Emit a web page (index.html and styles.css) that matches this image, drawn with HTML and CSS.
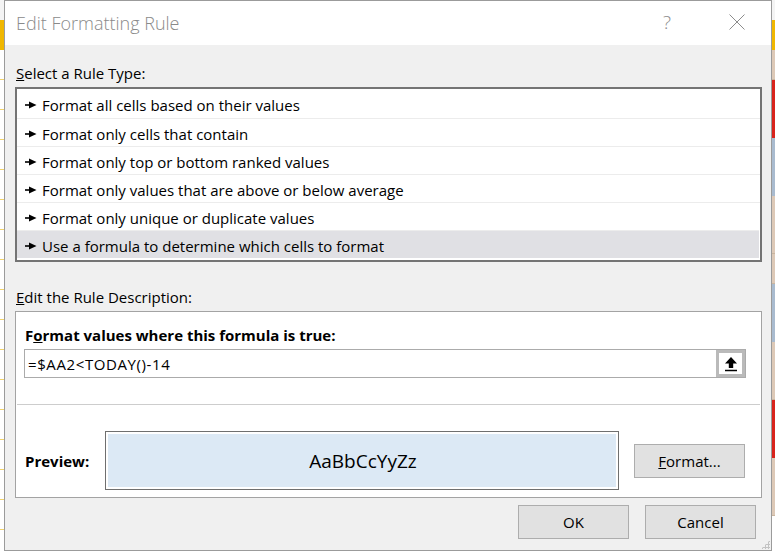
FILE: index.html
```html
<!DOCTYPE html>
<html lang="en">
<head>
  <meta charset="UTF-8">
  <meta name="viewport" content="width=device-width, initial-scale=1.0">
  <title>Edit Formatting Rule</title>
  <link rel="stylesheet" href="styles.css">
</head>
<body>
  <div class="desk">
    <!-- Mép bảng tính bên trái -->
    <div class="sheet sheet-left">
      <div class="cell c-blank"></div>
      <div class="cell c-yellow"></div>
      <div class="cell c-line"></div>
      <div class="cell c-line"></div>
      <div class="cell c-line"></div>
      <div class="cell c-line"></div>
      <div class="cell c-line"></div>
      <div class="cell c-line"></div>
      <div class="cell c-line"></div>
      <div class="cell c-line"></div>
      <div class="cell c-line"></div>
      <div class="cell c-line"></div>
      <div class="cell c-line"></div>
      <div class="cell c-line"></div>
      <div class="cell c-line"></div>
      <div class="cell c-line"></div>
      <div class="cell c-line"></div>
      <div class="cell c-line"></div>
    </div>

    <!-- Hộp thoại -->
    <div class="dialog">
      <div class="titlebar">
        <span class="title">Edit Formatting Rule</span>
        <span class="help">?</span>
        <svg class="close" width="16" height="16" viewBox="0 0 16 16">
          <path d="M0.5 0.5 L15.5 15.5 M15.5 0.5 L0.5 15.5" stroke="#8c8c8c" stroke-width="1" fill="none"/>
        </svg>
      </div>

      <div class="dialog-body">
        <div class="label label-type"><u>S</u>elect a Rule Type:</div>
        <ul class="rule-list">
          <li class="rule-item"><svg class="pointer" width="12" height="8" viewBox="0 0 12 8"><path d="M0 4h5" stroke="#000" stroke-width="1.6"/><path d="M4 0.5 L11.5 4 L4 7.5 Z" fill="#000"/></svg>Format all cells based on their values</li>
          <li class="rule-item"><svg class="pointer" width="12" height="8" viewBox="0 0 12 8"><path d="M0 4h5" stroke="#000" stroke-width="1.6"/><path d="M4 0.5 L11.5 4 L4 7.5 Z" fill="#000"/></svg>Format only cells that contain</li>
          <li class="rule-item"><svg class="pointer" width="12" height="8" viewBox="0 0 12 8"><path d="M0 4h5" stroke="#000" stroke-width="1.6"/><path d="M4 0.5 L11.5 4 L4 7.5 Z" fill="#000"/></svg>Format only top or bottom ranked values</li>
          <li class="rule-item"><svg class="pointer" width="12" height="8" viewBox="0 0 12 8"><path d="M0 4h5" stroke="#000" stroke-width="1.6"/><path d="M4 0.5 L11.5 4 L4 7.5 Z" fill="#000"/></svg>Format only values that are above or below average</li>
          <li class="rule-item"><svg class="pointer" width="12" height="8" viewBox="0 0 12 8"><path d="M0 4h5" stroke="#000" stroke-width="1.6"/><path d="M4 0.5 L11.5 4 L4 7.5 Z" fill="#000"/></svg>Format only unique or duplicate values</li>
          <li class="rule-item selected"><svg class="pointer" width="12" height="8" viewBox="0 0 12 8"><path d="M0 4h5" stroke="#000" stroke-width="1.6"/><path d="M4 0.5 L11.5 4 L4 7.5 Z" fill="#000"/></svg>Use a formula to determine which cells to format</li>
        </ul>

        <div class="label label-desc"><u>E</u>dit the Rule Description:</div>
        <div class="desc-box">
          <div class="desc-top">
            <div class="desc-heading">F<u>o</u>rmat values where this formula is true:</div>
            <div class="formula">
              <span class="formula-text">=$AA2&lt;TODAY()-14</span>
              <span class="ref-btn">
                <svg width="14" height="16" viewBox="0 0 14 16">
                  <path d="M7 1 L13 7.5 L9.2 7.5 L9.2 12 L4.8 12 L4.8 7.5 L1 7.5 Z" fill="#000"/>
                  <path d="M1 14.5h12" stroke="#000" stroke-width="1.5"/>
                </svg>
              </span>
            </div>
          </div>
          <div class="preview-row">
            <span class="preview-label">Preview:</span>
            <div class="preview-box"><div class="preview-fill">AaBbCcYyZz</div></div>
            <button class="btn btn-format"><u>F</u>ormat...</button>
          </div>
        </div>

        <div class="footer">
          <button class="btn">OK</button>
          <button class="btn">Cancel</button>
        </div>
      </div>
      <div class="grip"></div>
    </div>

    <!-- Mép bảng tính bên phải -->
    <div class="sheet sheet-right">
      <div class="cell c-blank"></div>
      <div class="cell c-yellow"></div>
      <div class="cell c-beige"></div>
      <div class="cell c-red tall"></div>
      <div class="cell c-blue tall"></div>
      <div class="cell c-beige tall"></div>
      <div class="cell c-beige"></div>
      <div class="cell c-blue tall"></div>
      <div class="cell c-beige tall"></div>
      <div class="cell c-red tall"></div>
      <div class="cell c-beige tall"></div>
    </div>
  </div>
</body>
</html>
```

FILE: styles.css
```css
/* Reset */
* {
  margin: 0;
  padding: 0;
  box-sizing: border-box;
}

body {
  font-family: "Open Sans", "Noto Sans", sans-serif;
  font-size: 15px;
  color: #000;
  background-color: #fff;
}

.desk {
  display: flex;
  height: 553px;
  overflow: hidden;
}

/* Bảng tính phía sau */
.sheet {
  display: flex;
  flex-direction: column;
}

.sheet-left {
  width: 4px;
}

.sheet-right {
  flex: 1;
}

.cell {
  height: 30px;
  flex-shrink: 0;
}

.cell.tall {
  height: 58px;
}

.c-blank {
  height: 20px;
  background-color: #f4f4f4;
}

.c-yellow {
  background-color: #f0b700;
}

.c-line {
  border-bottom: 1px solid #f2d36b;
}

.c-beige {
  background-color: #ddc9b7;
  border-bottom: 1px solid #c9b59f;
}

.c-red {
  background-color: #d8231b;
}

.c-blue {
  background-color: #a9bbcf;
}

/* Hộp thoại */
.dialog {
  position: relative;
  width: 768px;
  height: 551px;
  border: 1px solid #9b9b9b;
  background-color: #f0f0f0;
  display: flex;
  flex-direction: column;
}

.titlebar {
  height: 44px;
  background-color: #fff;
  display: flex;
  align-items: center;
  padding-left: 11px;
}

.title {
  font-size: 18px;
  font-weight: 300;
  color: #8a8a8a;
  flex: 1;
  margin-top: -1px;
}

.help {
  font-size: 19px;
  font-weight: 300;
  color: #8c8c8c;
  margin-right: 58px;
  margin-top: -2px;
}

.close {
  margin-right: 26px;
  margin-top: -2px;
}

.dialog-body {
  flex: 1;
  padding: 0 9px 0 10px;
  display: flex;
  flex-direction: column;
}

.label {
  line-height: 20px;
  margin-left: 1px;
}

.label-type {
  margin-top: 18px;
  margin-bottom: 4px;
}

.label-desc {
  margin-top: 25px;
  margin-bottom: 4px;
}

/* Danh sách loại quy tắc */
.rule-list {
  list-style: none;
  background-color: #fff;
  border: 2px solid #747474;
  padding: 1px 0 2px;
}

.rule-item {
  height: 28px;
  display: flex;
  align-items: center;
  padding-left: 8px;
  padding-top: 2px;
}

.rule-item + .rule-item {
  border-top: 1px solid #ececec;
}

.rule-item.selected {
  background-color: #e0e0e4;
  margin-right: 1px;
}

.pointer {
  margin-right: 5px;
  flex-shrink: 0;
}

/* Mô tả quy tắc */
.desc-box {
  background-color: #fff;
  border: 1px solid #a3a3a3;
  height: 187px;
  display: flex;
  flex-direction: column;
}

.desc-top {
  padding: 13px 15px 26px 8px;
}

.desc-heading {
  font-weight: bold;
  line-height: 20px;
  margin-left: 1px;
  margin-bottom: 4px;
}

.formula {
  height: 29px;
  border: 1px solid #ababab;
  display: flex;
  align-items: center;
}

.formula-text {
  flex: 1;
  padding-left: 3px;
  padding-top: 1px;
  letter-spacing: 0.6px;
}

.ref-btn {
  width: 29px;
  height: 27px;
  border: 3px solid #bababa;
  display: flex;
  align-items: center;
  justify-content: center;
  background-color: #fff;
}

.preview-row {
  flex: 1;
  margin: 0 1px;
  border-top: 1px solid #cdcdcd;
  display: flex;
  align-items: center;
  padding: 19px 0 0 8px;
}

.preview-label {
  width: 80px;
  font-weight: bold;
}

.preview-box {
  width: 514px;
  height: 59px;
  border: 1px solid #6f6f6f;
  padding: 2px;
  background-color: #fff;
}

.preview-fill {
  height: 100%;
  background-color: #dce9f5;
  display: flex;
  align-items: center;
  justify-content: center;
  font-size: 19px;
  padding-left: 2px;
}

/* Nút */
.btn {
  width: 111px;
  height: 34px;
  font-family: inherit;
  font-size: 15px;
  color: #000;
  background-color: #e1e1e1;
  border: 1px solid #adadad;
}

.btn-format {
  margin-left: 15px;
}

.footer {
  display: flex;
  justify-content: flex-end;
  gap: 16px;
  margin-top: 7px;
  padding-right: 6px;
}

.grip {
  position: absolute;
  right: 1px;
  bottom: 1px;
  width: 9px;
  height: 9px;
  background-image: radial-gradient(circle, #c2c2c2 1px, transparent 1.2px);
  background-size: 3px 3px;
  clip-path: polygon(100% 0, 100% 100%, 0 100%);
}
```
